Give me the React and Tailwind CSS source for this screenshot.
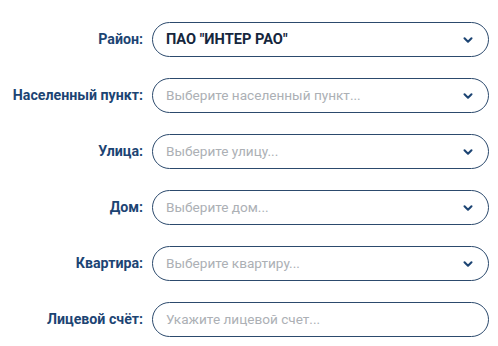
import { ChevronDown } from "lucide-react";

const rows = [
  { label: "Район:", value: 'ПАО "ИНТЕР РАО"', select: true },
  { label: "Населенный пункт:", placeholder: "Выберите населенный пункт...", select: true },
  { label: "Улица:", placeholder: "Выберите улицу...", select: true },
  { label: "Дом:", placeholder: "Выберите дом...", select: true },
  { label: "Квартира:", placeholder: "Выберите квартиру...", select: true },
  { label: "Лицевой счёт:", placeholder: "Укажите лицевой счет..." },
];

function Row({ label, value, placeholder, select }) {
  return (
    <div className="flex items-center">
      <label className="w-[144px] pr-[1px] text-right text-[14.2px] font-bold text-[#1c4473]">{label}</label>
      <div className="ml-[8px] flex h-[35px] w-[337px] items-center rounded-[18px] border border-[#2c4a6d] pl-[13px] pr-[13px]">
        {value ? (
          <span className="flex-1 text-[14.6px] font-bold text-[#15263d]">{value}</span>
        ) : (
          <span className="flex-1 text-[13.6px] text-[#acb0b5]">{placeholder}</span>
        )}
        {select && <ChevronDown size={14} strokeWidth={3.5} className="text-[#1c4473]" />}
      </div>
    </div>
  );
}

export default function App() {
  return (
    <div className="flex h-[346px] w-[498px] flex-col gap-[21px] bg-white pt-[22px]" style={{ fontFamily: "Roboto, 'Liberation Sans', sans-serif" }}>
      {rows.map((r) => (
        <Row key={r.label} {...r} />
      ))}
    </div>
  );
}
